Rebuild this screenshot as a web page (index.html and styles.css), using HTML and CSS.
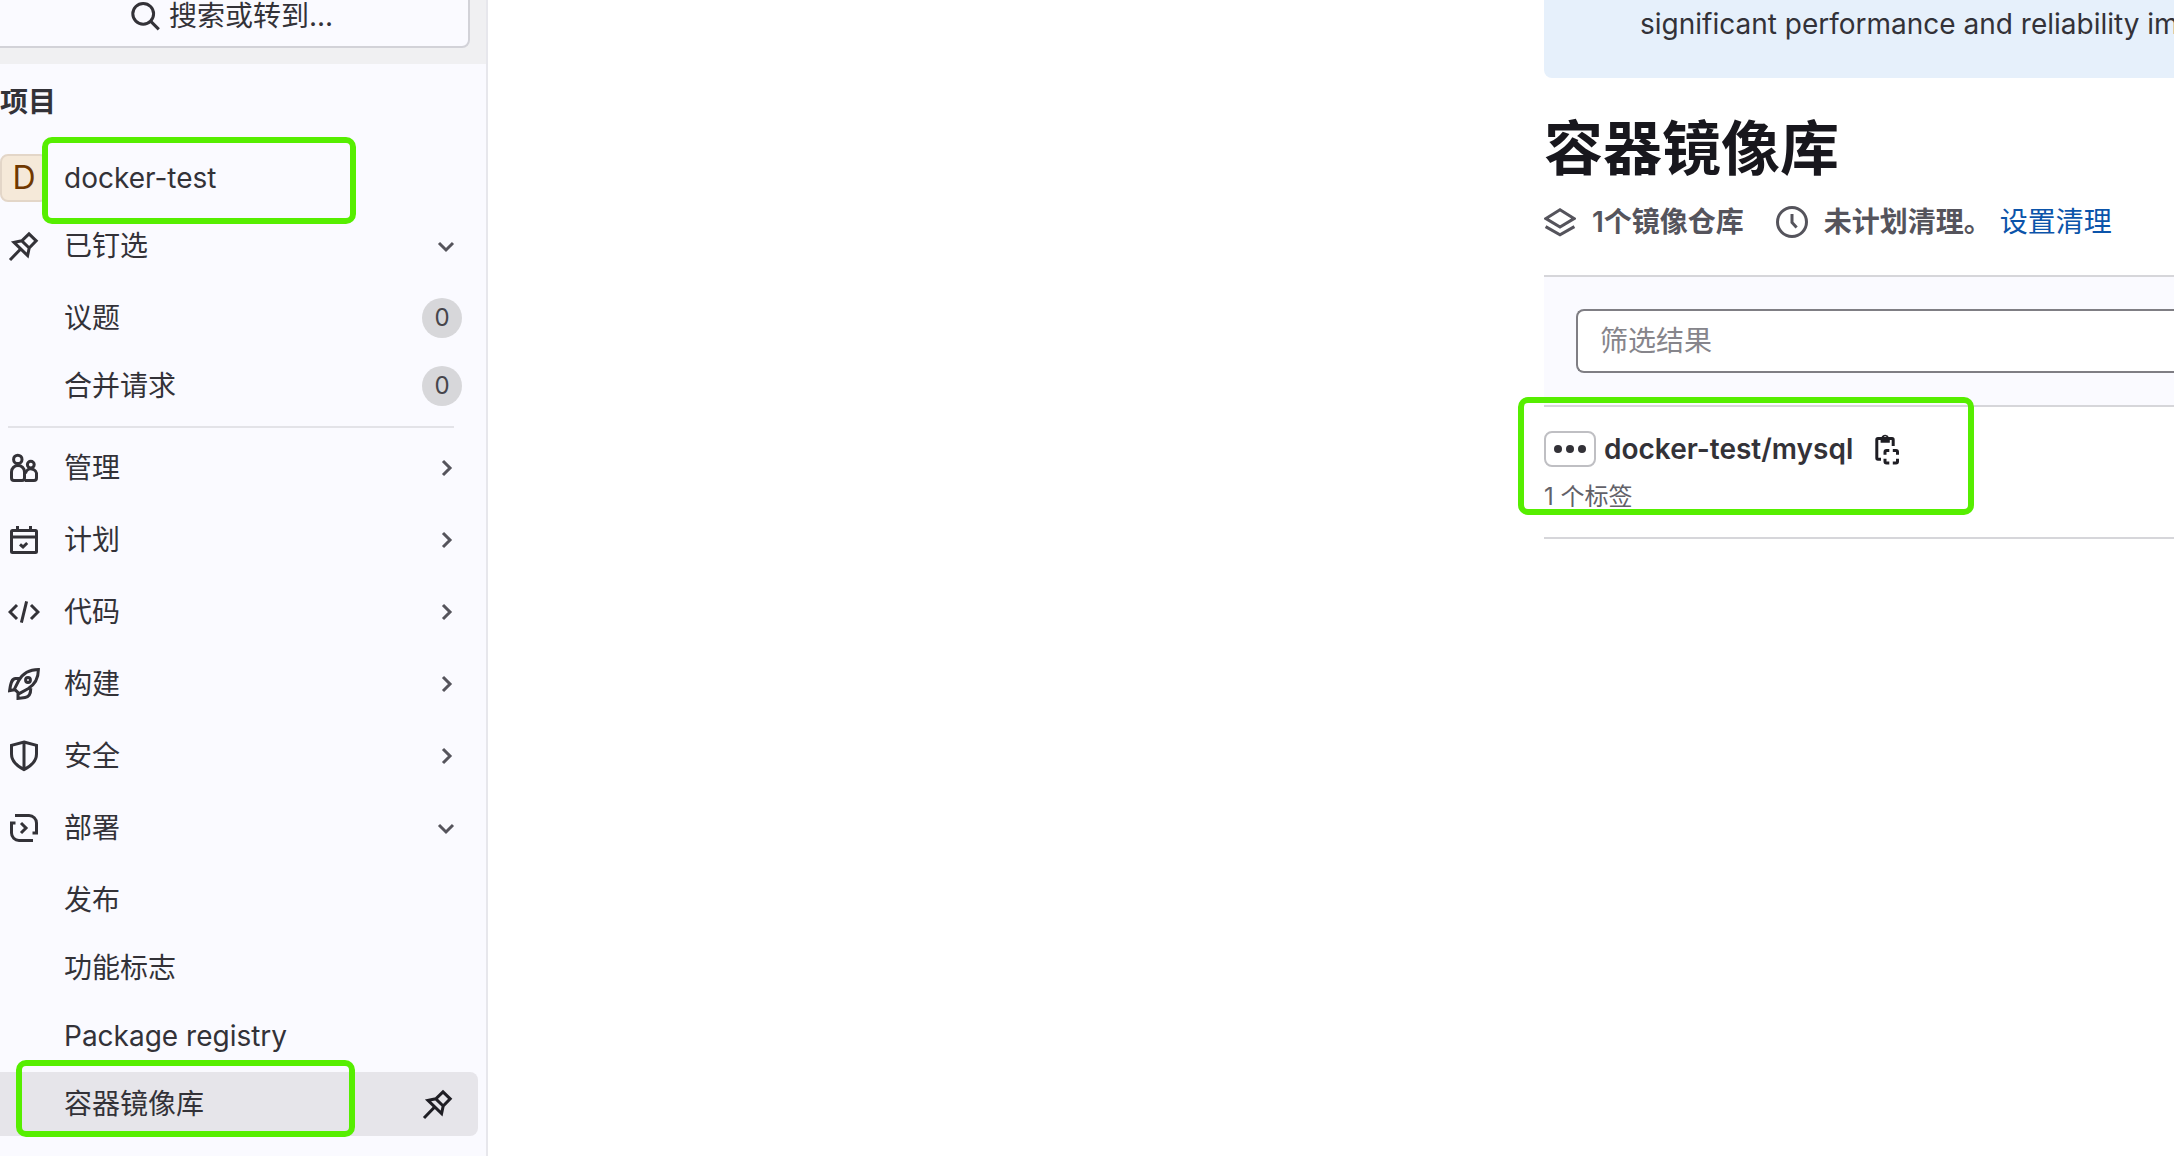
FILE: index.html
```html
<!DOCTYPE html>
<html lang="zh-CN">
<head>
    <meta charset="UTF-8">
    <meta name="viewport" content="width=device-width, initial-scale=1.0">
    <title>容器镜像库 · docker-test</title>
    <link rel="stylesheet" href="styles.css">
</head>
<body>
    <!-- Shared icons -->
    <svg class="sprite" aria-hidden="true">
        <symbol id="pin" viewBox="0 0 16 16"><path d="M10.5 1.9 14.1 5.4 10.6 9 9.8 12.8 3 6.2 6.9 5.4zM6.9 5.4 10.6 9M6.2 9.6 1 15"/></symbol>
        <symbol id="chevron-down" viewBox="0 0 16 16"><path d="M4.5 6.5 8 10l3.5-3.5"/></symbol>
        <symbol id="chevron-right" viewBox="0 0 16 16"><path d="M6.5 4.5 10 8l-3.5 3.5"/></symbol>
    </svg>

    <div class="layout">
        <aside class="sidebar">
            <div class="top-bar">
                <button class="search-button" type="button">
                    <svg class="icon" viewBox="0 0 16 16"><circle cx="7.1" cy="6.9" r="5.2"/><path d="m10.9 10.7 4 4"/></svg>
                    搜索或转到...
                </button>
            </div>

            <nav class="nav">
                <h2 class="nav-title">项目</h2>

                <a class="nav-item project" href="#">
                    <span class="avatar">D</span>
                    <span class="label">docker-test</span>
                    <span class="highlight highlight-project"></span>
                </a>

                <button class="nav-item" type="button" aria-expanded="true">
                    <svg class="icon"><use href="#pin"/></svg>
                    <span class="label">已钉选</span>
                    <svg class="icon chevron"><use href="#chevron-down"/></svg>
                </button>
                <ul class="sub-nav">
                    <li><a class="nav-item" href="#"><span class="label">议题</span><span class="badge">0</span></a></li>
                    <li><a class="nav-item" href="#"><span class="label">合并请求</span><span class="badge">0</span></a></li>
                </ul>

                <hr class="divider">

                <button class="nav-item" type="button">
                    <svg class="icon" viewBox="0 0 16 16"><circle cx="4.9" cy="3.7" r="2.1"/><path d="M1.75 13V10a3.25 3.25 0 0 1 6.5 0v3c0 .8-.5 1.25-1.25 1.25H3c-.75 0-1.25-.45-1.25-1.25z"/><circle cx="11.4" cy="6.3" r="1.7"/><path d="M8.4 14.25H13c.75 0 1.25-.45 1.25-1.25v-1.4a2.75 2.75 0 0 0-5.5-.8"/></svg>
                    <span class="label">管理</span>
                    <svg class="icon chevron"><use href="#chevron-right"/></svg>
                </button>
                <button class="nav-item" type="button">
                    <svg class="icon" viewBox="0 0 16 16"><rect x="1.75" y="3.25" width="12.5" height="11" rx=".5"/><path d="M1.75 6.5h12.5M4.75 1v2M11.25 1v2M6 10.2l1.5 1.3 2.1-2"/></svg>
                    <span class="label">计划</span>
                    <svg class="icon chevron"><use href="#chevron-right"/></svg>
                </button>
                <button class="nav-item" type="button">
                    <svg class="icon" viewBox="0 0 16 16"><path d="M4.5 4.5 1 8l3.5 3.5M11.5 4.5 15 8l-3.5 3.5M9.3 2.7 6.7 13.3"/></svg>
                    <span class="label">代码</span>
                    <svg class="icon chevron"><use href="#chevron-right"/></svg>
                </button>
                <button class="nav-item" type="button">
                    <svg class="icon" viewBox="0 0 16 16"><path d="M15.2.8C9.8.8 7 3.4 5.3 6.4L3.2 10.6 5.6 12.8 10 10.4C13 8.6 15.2 6 15.2.8zM6 5.2H3.8C2 5.2 1.4 7 .8 11.3l2.4-.4M5 12.6v2.6l3.6-.5c1.9-.3 2.8-1.5 2.8-4.6"/><circle cx="10" cy="6" r="1.2"/></svg>
                    <span class="label">构建</span>
                    <svg class="icon chevron"><use href="#chevron-right"/></svg>
                </button>
                <button class="nav-item" type="button">
                    <svg class="icon" viewBox="0 0 16 16"><path d="M8 1 14.25 2.7V7c0 3.8-2.7 6-6.25 7.8C4.45 13 1.75 10.8 1.75 7V2.7zM8 1v13.5"/></svg>
                    <span class="label">安全</span>
                    <svg class="icon chevron"><use href="#chevron-right"/></svg>
                </button>
                <button class="nav-item" type="button" aria-expanded="true">
                    <svg class="icon" viewBox="0 0 16 16"><path d="M3.5 1.75H10.5a3.75 3.75 0 0 1 3.75 3.75v5h-2M3.75 5.5h-2v5a3.75 3.75 0 0 0 3.75 3.75h7M6.5 5.5 9 8 6.5 10.5"/></svg>
                    <span class="label">部署</span>
                    <svg class="icon chevron"><use href="#chevron-down"/></svg>
                </button>
                <ul class="sub-nav">
                    <li><a class="nav-item" href="#"><span class="label">发布</span></a></li>
                    <li><a class="nav-item" href="#"><span class="label">功能标志</span></a></li>
                    <li><a class="nav-item" href="#"><span class="label">Package registry</span></a></li>
                    <li>
                        <a class="nav-item active" href="#" aria-current="page">
                            <span class="label">容器镜像库</span>
                            <svg class="icon unpin"><use href="#pin"/></svg>
                            <span class="highlight highlight-registry"></span>
                        </a>
                    </li>
                </ul>
            </nav>
        </aside>

        <main class="content">
            <div class="banner">significant performance and reliability improvements</div>

            <h1 class="page-title">容器镜像库</h1>
            <div class="meta">
                <svg class="icon" viewBox="0 0 16 16"><path d="M8 1.9 15 6.3 8 10.5 1 6.3zM.8 10.3 8 14.4l7.2-4.1"/></svg>
                <strong>1个镜像仓库</strong>
                <svg class="icon clock" viewBox="0 0 16 16"><circle cx="8" cy="8" r="7.25"/><path d="M8 4v4.2l2.3 2.6"/></svg>
                <strong>未计划清理。</strong>
                <a class="meta-link" href="#">设置清理</a>
            </div>

            <div class="filter">
                <input class="filter-input" type="text" placeholder="筛选结果" aria-label="筛选结果">
            </div>

            <div class="repository">
                <div class="repository-name">
                    <button class="more-button" type="button" aria-label="更多">
                        <svg class="icon dots" viewBox="0 0 16 16"><circle cx="2" cy="8" r="2"/><circle cx="8" cy="8" r="2"/><circle cx="14" cy="8" r="2"/></svg>
                    </button>
                    <a class="repository-link" href="#">docker-test/mysql</a>
                    <button class="copy-button" type="button" aria-label="复制">
                        <svg class="icon" viewBox="0 0 16 16"><path d="M5 13.1H3.5a.6.6 0 0 1-.6-.6V3.4a.6.6 0 0 1 .6-.6h7a.6.6 0 0 1 .6.6v3.1M7 10.9V9.5q0-.75.75-.75h1.4M10.9 8.75h1.6q.75 0 .75.75v1.4M7 12.9v1.4q0 .75.75.75h1.4M10.9 15.05h1.6q.75 0 .75-.75v-1.4"/><path class="clip" d="M4.8 4.9V2.3h.4a2 2 0 0 1 3.8 0h.4v2.6zM7.1 1.6a.7.7 0 1 0 0 1.4.7.7 0 0 0 0-1.4z"/></svg>
                    </button>
                </div>
                <div class="tag-count">1 个标签</div>
                <span class="highlight highlight-repository"></span>
            </div>
        </main>
    </div>
</body>
</html>
```

FILE: styles.css
```css
* {
    box-sizing: border-box;
}

body {
    margin: 0;
    background-color: #fff;
    color: #333238;
    font-family: Inter, "Noto Sans CJK SC", sans-serif;
    font-size: 28px;
    line-height: 40px;
}

button,
input {
    margin: 0;
    font: inherit;
    color: inherit;
}

a {
    color: inherit;
    text-decoration: none;
}

.sprite {
    display: none;
}

.icon {
    display: block;
    flex: none;
    width: 32px;
    height: 32px;
    fill: none;
    stroke: currentColor;
    stroke-width: 1.5;
}

.layout {
    display: grid;
    grid-template-columns: 488px 1056fr 630fr; /* content sits in the last column */
    min-height: 100vh;
}

/* Sidebar */
.sidebar {
    background-color: #fafaff;
    border-right: 2px solid #e7e7ec;
}

.top-bar {
    background-color: #f0f0f2;
    padding: 0 16px 16px 0;
}

.search-button {
    display: flex;
    align-items: center;
    justify-content: center;
    gap: 8px;
    width: calc(100% + 8px);
    height: 64px;
    margin: -16px 0 0 -8px; /* partly scrolled out of view */
    border: 2px solid #d2d2d8;
    border-radius: 8px;
    background-color: #fafaff;
}

.nav {
    padding: 18px 8px 16px 0;
}

.nav-title {
    margin: 0 0 24px;
    font-size: 28px;
    font-weight: 600;
}

.nav-item {
    position: relative;
    display: flex;
    align-items: center;
    width: 100%;
    height: 64px;
    margin-bottom: 8px;
    padding: 0 16px 0 8px;
    border: none;
    border-radius: 8px;
    background: none;
    text-align: left;
    cursor: pointer;
}

.label {
    flex: 1;
    margin-left: 24px;
}

.sub-nav .label {
    margin-left: 56px;
}

.project {
    margin-bottom: 4px;
    padding-left: 0;
}

.project .label {
    margin-left: 16px;
}

.avatar {
    display: flex;
    align-items: center;
    justify-content: center;
    width: 48px;
    height: 48px;
    border: 2px solid #e3d6c8;
    border-radius: 8px;
    background-color: #f5e9d9;
    color: #703800;
    font-size: 32px;
}

.chevron {
    color: #55545c;
}

.sub-nav {
    list-style: none;
    margin: 0 0 8px;
    padding: 0;
}

.sub-nav .nav-item {
    margin-bottom: 4px;
}

.sub-nav li:last-child .nav-item {
    margin-bottom: 0;
}

.badge {
    width: 40px;
    height: 40px;
    border-radius: 50%;
    background-color: #d7d7da;
    color: #46454b;
    font-size: 24px;
    text-align: center;
}

.divider {
    height: 2px;
    margin: 0 24px 8px 8px;
    border: none;
    background-color: #e3e3e8;
}

.nav-item.active {
    border-radius: 0 8px 8px 0;
    background-color: #e6e5ea;
}

.unpin {
    margin-right: 8px;
    color: #1f1e24;
}

/* Content */
.content {
    grid-column: 3;
    min-width: 0;
}

.banner {
    height: 78px;
    padding: 4px 0 0 96px;
    border-bottom-left-radius: 8px;
    background-color: #e6f0fb;
    overflow: hidden;
    white-space: nowrap;
}

.page-title {
    margin: 33px 0 15px;
    color: #18171d;
    font-size: 59px;
    font-weight: 600;
    line-height: 76px;
}

.meta {
    display: flex;
    align-items: center;
    gap: 16px;
    margin-bottom: 33px;
    color: #55545c;
    white-space: nowrap;
}

.meta strong {
    font-weight: 600;
}

.meta .clock {
    margin-left: 16px;
}

.meta-link {
    margin-left: -8px;
    color: #0b54aa;
}

.filter {
    padding: 32px 0 32px 32px;
    border-top: 2px solid #d6d6da;
    border-bottom: 2px solid #d6d6da;
    background-color: #fafaff;
}

.filter-input {
    display: block;
    width: 100%;
    height: 64px;
    padding: 0 22px;
    border: 2px solid #7f7e84;
    border-right: none;
    border-radius: 8px 0 0 8px;
    background-color: #fff;
}

.filter-input::placeholder {
    color: #86858b;
    opacity: 1;
}

.repository {
    position: relative;
    padding: 22px 0 20px;
    border-bottom: 2px solid #d6d6da;
}

.repository-name {
    display: flex;
    align-items: center;
    gap: 8px;
}

.more-button {
    display: flex;
    align-items: center;
    justify-content: center;
    width: 52px;
    height: 36px;
    padding: 0;
    border: 2px solid #bfbfc3;
    border-radius: 8px;
    background-color: #fff;
}

.icon.dots {
    fill: currentColor;
    stroke: none;
}

.repository-link {
    font-weight: 600;
}

.copy-button {
    margin-left: 10px;
    padding: 0;
    border: none;
    background: none;
    color: #1f1e24;
}

.icon .clip {
    fill: currentColor;
    fill-rule: evenodd;
    stroke: none;
}

.tag-count {
    margin-top: 8px;
    color: #626168;
    font-size: 24px;
}

/* Green marker frames */
.highlight {
    position: absolute;
    border: 6px solid #56ee00;
    border-radius: 10px;
    pointer-events: none;
}

.highlight-project {
    top: -9px;
    left: 42px;
    width: 314px;
    height: 87px;
}

.highlight-registry {
    top: -12px;
    left: 16px;
    width: 339px;
    height: 77px;
}

.highlight-repository {
    top: -10px;
    left: -26px;
    width: 456px;
    height: 118px;
}
```
